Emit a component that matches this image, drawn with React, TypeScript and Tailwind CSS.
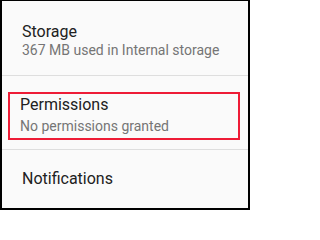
import React from "react";

const font = { fontFamily: "Roboto, 'Noto Sans', sans-serif" };

export default function App() {
  return (
    <div
      className="w-[250px] h-[210px] bg-[#fafafa] border-black border-t border-l-2 border-r-2 border-b-2 flex flex-col overflow-hidden"
      style={font}
    >
      {/* Storage */}
      <div className="h-[74px] pl-[20px] pt-[20px] shrink-0">
        <div className="text-[16px] leading-[22px] text-[#212121]">Storage</div>
        <div className="text-[14px] leading-[15px] text-[#757575]">
          367 MB used in Internal storage
        </div>
      </div>
      <div className="h-px bg-[#dedede] shrink-0" />

      {/* Permissions - highlighted */}
      <div className="h-[73px] pt-[16px] pl-[6px] shrink-0">
        <div className="w-[232px] h-[48px] border-2 border-[#ee1c36] pl-[10px]">
          <div className="text-[16px] leading-[21px] text-[#212121]">Permissions</div>
          <div className="text-[14px] leading-[22px] text-[#757575]">
            No permissions granted
          </div>
        </div>
      </div>
      <div className="h-px bg-[#dedede] shrink-0" />

      {/* Notifications */}
      <div className="flex-1 pl-[20px] pt-[18px]">
        <div className="text-[16px] leading-[22px] text-[#212121]">Notifications</div>
      </div>
    </div>
  );
}
